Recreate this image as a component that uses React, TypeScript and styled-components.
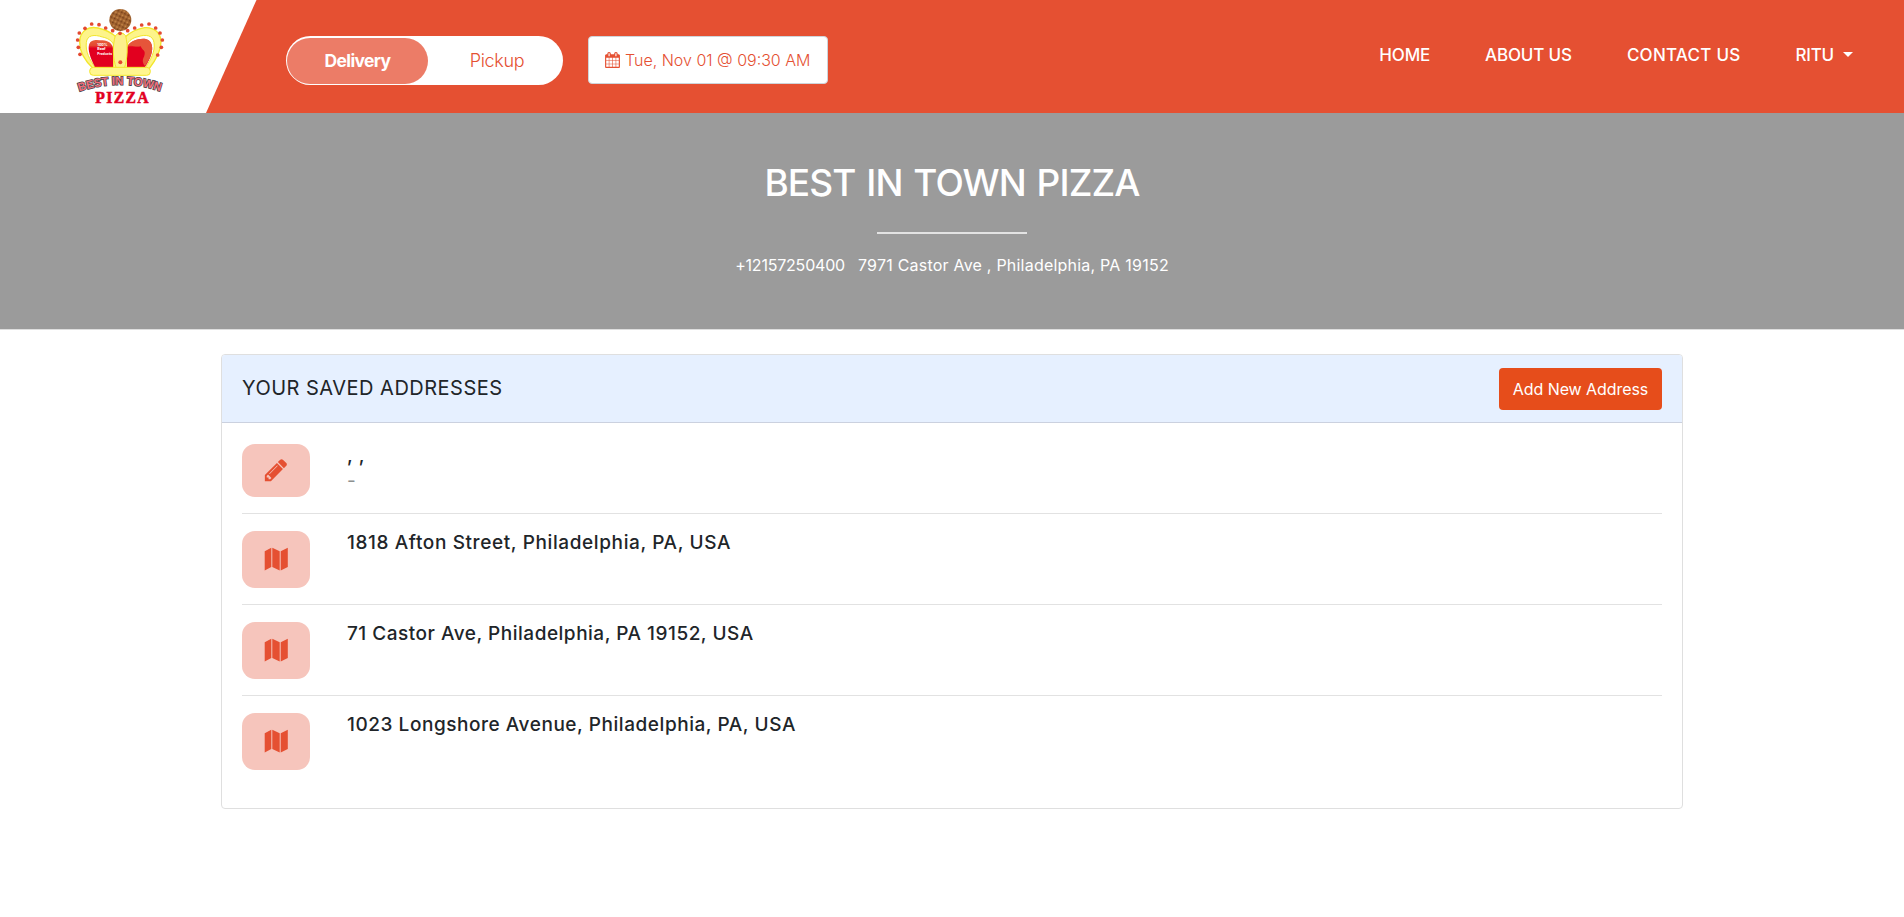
import React from "react";
import styled, { createGlobalStyle } from "styled-components";

const sans = `Inter, "Liberation Sans", sans-serif`;
const brand = "#e55032";

const GlobalStyle = createGlobalStyle`
  *, *::before, *::after { box-sizing: border-box; }
  body { margin: 0; background: #fff; color: #212529; font-family: ${sans}; }
`;

const Header = styled.header`
  display: flex;
  align-items: flex-start;
  height: 113px;
  background: ${brand};
`;

const LogoPanel = styled.a`
  display: block;
  flex: none;
  width: 257px;
  height: 113px;
  padding: 4px 0 0 70px;
  background: #fff;
  clip-path: polygon(0 0, 256.5px 0, 206px 100%, 0 100%);
`;

const Toggle = styled.div`
  display: flex;
  flex: none;
  width: 277px;
  height: 49px;
  margin: 36px 25px 0 29px;
  padding: 2px 1px 1px;
  border-radius: 25px;
  background: #fff;
`;

const ToggleOption = styled.button<{ $active?: boolean }>`
  width: ${(p) => (p.$active ? 141 : 134)}px;
  height: 46px;
  padding: 0 0 0 ${(p) => (p.$active ? 0 : 4)}px;
  border: 0;
  border-radius: 23px;
  background: ${(p) => (p.$active ? "#ec7c67" : "transparent")};
  color: ${(p) => (p.$active ? "#fff" : brand)};
  font: ${(p) => (p.$active ? 700 : 300)} ${(p) => (p.$active ? 17.5 : 18)}px/46px ${sans};
  letter-spacing: ${(p) => (p.$active ? -0.65 : -0.3)}px;
`;

const DateButton = styled.button`
  display: flex;
  flex: none;
  align-items: center;
  gap: 5px;
  width: 240px;
  height: 48px;
  margin-top: 36px;
  padding: 0 0 0 16px;
  border: 1px solid #ced4da;
  border-radius: 4px;
  background: #fff;
  color: ${brand};
  font: 300 16px/24px ${sans};
  letter-spacing: 0;
  white-space: nowrap;
`;

const Nav = styled.nav`
  display: flex;
  gap: 55px;
  margin-left: auto;
  padding-right: 51px;
`;

const NavLink = styled.a<{ $spacing: number }>`
  display: flex;
  align-items: center;
  color: #fff;
  font: 500 17px/110px ${sans};
  letter-spacing: ${(p) => p.$spacing}px;
  white-space: nowrap;
`;

const Caret = styled.span`
  margin: -2px 0 0 9px;
  border-top: 5px solid #fff;
  border-left: 5px solid transparent;
  border-right: 5px solid transparent;
`;

const Hero = styled.section`
  display: flex;
  flex-direction: column;
  align-items: center;
  height: 217px;
  padding-top: 47px;
  border-bottom: 1px solid #dedede;
  background: #9b9b9b;
  color: #fff;
`;

const HeroTitle = styled.h1`
  margin: 0;
  font: 500 37px/45px ${sans};
  letter-spacing: -0.9px;
  word-spacing: 1.8px;
`;

const HeroRule = styled.hr`
  width: 150px;
  height: 2px;
  margin: 27px 0 18px;
  border: 0;
  background: #e3e3e3;
`;

const Contact = styled.p`
  display: flex;
  gap: 13px;
  margin: 0;
  font: 400 16px/26px ${sans};
`;

const Phone = styled.span`
  letter-spacing: -0.2px;
`;

const Street = styled.span`
  letter-spacing: 0.22px;
`;

const Card = styled.main`
  width: 1462px;
  height: 455px;
  margin: 24px auto 0;
  border: 1px solid #dfdfdf;
  border-radius: 4px;
  overflow: hidden;
`;

const CardHeader = styled.div`
  display: flex;
  align-items: center;
  justify-content: space-between;
  height: 68px;
  padding: 0 20px;
  border-bottom: 1px solid #cbd1df;
  background: #e6f0ff;
`;

const CardTitle = styled.h2`
  margin: 0;
  padding-bottom: 2px;
  font: 400 20px/26px ${sans};
  letter-spacing: 0.49px;
`;

const AddButton = styled.button`
  width: 163px;
  height: 42px;
  margin-top: 1px;
  padding: 0;
  border: 0;
  border-radius: 4px;
  background: #e64d1b;
  color: #fff;
  font: 400 16px/40px ${sans};
  letter-spacing: -0.07px;
`;

const AddressList = styled.ul`
  margin: 0;
  padding: 3px 20px 0;
  list-style: none;
`;

const AddressRow = styled.li<{ $compact?: boolean }>`
  display: flex;
  align-items: flex-start;
  gap: 37px;
  height: ${(p) => (p.$compact ? 88 : 91)}px;
  padding-top: ${(p) => (p.$compact ? 18 : 17)}px;
  border-bottom: 1px solid #e2e2e2;

  &:last-child { border-bottom: 0; }
`;

const IconTile = styled.span<{ $compact?: boolean }>`
  display: flex;
  align-items: center;
  justify-content: center;
  width: 68px;
  height: ${(p) => (p.$compact ? 53 : 57)}px;
  padding-bottom: 2px;
  border-radius: 13px;
  background: #f6c5bc;
  color: ${brand};
`;

const Address = styled.div`
  display: flex;
  flex-direction: column;
`;

const AddressLine = styled.span<{ $spacing: number }>`
  font: 500 19px/23px ${sans};
  letter-spacing: ${(p) => p.$spacing}px;
  white-space: pre;
`;

const AddressNote = styled.span`
  color: #8d9190;
  font: 400 19px/27px ${sans};
`;

const Pencil = () => (
  <svg width="26" height="26" viewBox="0 0 1792 1792" fill="currentColor">
    <path d="M491 1536l91-91-235-235-91 91v107h128v128h107zm523-928q0-22-22-22-10 0-17 7l-542 542q-7 7-7 17 0 22 22 22 10 0 17-7l542-542q7-7 7-17zm-54-192l416 416-832 832h-416v-416zm683 96q0 53-37 90l-166 166-416-416 166-165q36-38 90-38 53 0 91 38l235 234q37 39 37 91z" />
  </svg>
);

const MapFold = () => (
  <svg width="24" height="24" viewBox="0 0 24 24" fill="currentColor">
    <path d="M0.7 4.2 7.3.7v19.2L.7 23.4ZM8.3.7l7.4 3.5v19.2l-7.4-3.5ZM16.7 4.2 23.8.7v19.2l-7.1 3.5Z" />
  </svg>
);

const Calendar = () => (
  <svg width="15" height="16" viewBox="0 0 1664 1792" fill="currentColor">
    <path d="M128 1664h288v-288h-288v288zm352 0h320v-288h-320v288zm-352-352h288v-320h-288v320zm352 0h320v-320h-320v320zm-352-384h288v-288h-288v288zm736 736h320v-288h-320v288zm-384-736h320v-288h-320v288zm768 736h288v-288h-288v288zm-384-352h320v-320h-320v320zm-352-864v-288q0-13-9.5-22.5t-22.5-9.5h-64q-13 0-22.5 9.5t-9.5 22.5v288q0 13 9.5 22.5t22.5 9.5h64q13 0 22.5-9.5t9.5-22.5zm736 864h288v-320h-288v320zm-384-384h320v-288h-320v288zm384 0h288v-288h-288v288zm32-480v-288q0-13-9.5-22.5t-22.5-9.5h-64q-13 0-22.5 9.5t-9.5 22.5v288q0 13 9.5 22.5t22.5 9.5h64q13 0 22.5-9.5t9.5-22.5zm384-64v1280q0 52-38 90t-90 38h-1408q-52 0-90-38t-38-90v-1280q0-52 38-90t90-38h128v-96q0-66 47-113t113-47h64q66 0 113 47t47 113v96h384v-96q0-66 47-113t113-47h64q66 0 113 47t47 113v96h128q52 0 90 38t38 90z" />
  </svg>
);

const beads: [number, number][] = [
  [30, 151], [25, 130], [23, 108], [28, 87], [45, 73], [65, 60], [87, 62], [107, 72], [128, 80],
  [150, 88], [173, 80], [194, 72], [215, 63], [237, 60], [257, 72], [270, 87], [277, 108], [274, 130], [263, 153],
];

const Logo = () => (
  <svg width="100" height="106" viewBox="0 0 300 318">
    <defs>
      <pattern id="crust" width="11" height="13" patternUnits="userSpaceOnUse" patternTransform="rotate(25)">
        <rect width="11" height="13" fill="#a0622f" />
        <circle cx="3" cy="3" r="2.6" fill="#c98a4a" />
        <circle cx="8" cy="9" r="2.2" fill="#6a3514" />
      </pattern>
      <linearGradient id="velvet" x1="0" y1="0" x2="0" y2="1">
        <stop offset="0" stopColor="#e85f3d" />
        <stop offset=".2" stopColor="#e4482f" />
        <stop offset=".3" stopColor="#e2001f" />
        <stop offset="1" stopColor="#e2001f" />
      </linearGradient>
    </defs>
    <circle cx="151" cy="48" r="33" fill="url(#crust)" />
    <path
      d="M72 196C44 170 28 143 29 113C30 78 58 66 84 72C108 77 126 88 139 99C142 84 160 84 165 99C180 86 198 75 224 71C254 69 272 88 273 113C273 144 256 170 236 196Z"
      fill="#fdf48a" stroke="#f2e62c" strokeWidth="4"
    />
    <path d="M76 191C58 165 46 143 49 116C51 92 74 91 97 99C113 102 125 110 130 120V191Z" fill="#fff" stroke="#f2e62c" strokeWidth="3" />
    <path d="M226 191C243 165 256 143 252 116C249 94 228 90 204 98C187 102 177 110 172 120V191Z" fill="#fff" stroke="#f2e62c" strokeWidth="3" />
    <path d="M75 189C61 161 53 139 57 122C63 103 84 108 98 109C115 110 127 119 129 132V191Z" fill="url(#velvet)" />
    <path d="M225 189C243 161 250 139 245 122C239 101 218 103 205 106C185 111 173 120 171 134V191Z" fill="url(#velvet)" />
    <path d="M225 186C243 161 250 139 245 122C239 101 218 103 205 106C188 110 176 118 172 128C186 120 196 132 212 126C216 140 230 138 222 158C216 168 218 178 225 186Z" fill="#e6553a" />
    <path d="M136 95C148 84 156 84 167 95C174 125 173 163 163 193H139C128 162 127 127 136 95Z" fill="#fdf08c" stroke="#f2e62c" strokeWidth="3" />
    <rect x="59" y="190" width="182" height="24" rx="11" fill="#fff68f" stroke="#f2e62c" strokeWidth="3" />
    {beads.map(([x, y]) => (
      <circle key={`${x}-${y}`} cx={x} cy={y} r="5.6" fill="#e4492f" />
    ))}
    <circle cx="151" cy="175" r="6" fill="#e4492f" />
    <g fill="#fff" fontFamily={sans} fontWeight="700" fontSize="11">
      <text x="82" y="125">100%</text>
      <text x="82" y="139">Beef</text>
      <text x="82" y="154" textLength="44" lengthAdjust="spacingAndGlyphs">Products</text>
    </g>
    <path id="arc" d="M28 263Q150 221 274 263" fill="none" />
    <text
      fill="#f0707c" stroke="#454045" strokeWidth="4.5" paintOrder="stroke"
      fontFamily={`"Liberation Sans", sans-serif`} fontWeight="700" fontSize="35"
    >
      <textPath href="#arc" textLength="248" lengthAdjust="spacingAndGlyphs">BEST IN TOWN</textPath>
    </text>
    <text
      x="76" y="296" fill="#e2001f" stroke="#e2001f" strokeWidth="1.6"
      fontFamily={`"Liberation Serif", serif`} fontWeight="700" fontSize="47"
      textLength="160" lengthAdjust="spacing"
    >
      PIZZA
    </text>
  </svg>
);

const addresses = [
  { text: "1818 Afton Street, Philadelphia, PA, USA", spacing: 0.61 },
  { text: "71 Castor Ave, Philadelphia, PA 19152, USA", spacing: 0.51 },
  { text: "1023 Longshore Avenue, Philadelphia, PA, USA", spacing: 0.55 },
];

export default function App() {
  return (
    <>
      <GlobalStyle />
      <Header>
        <LogoPanel><Logo /></LogoPanel>
        <Toggle>
          <ToggleOption $active>Delivery</ToggleOption>
          <ToggleOption>Pickup</ToggleOption>
        </Toggle>
        <DateButton>
          <Calendar />
          Tue, Nov 01 @ 09:30 AM
        </DateButton>
        <Nav>
          <NavLink $spacing={-0.2}>HOME</NavLink>
          <NavLink $spacing={-0.15}>ABOUT US</NavLink>
          <NavLink $spacing={0.25}>CONTACT US</NavLink>
          <NavLink $spacing={-0.2}>RITU<Caret /></NavLink>
        </Nav>
      </Header>
      <Hero>
        <HeroTitle>BEST IN TOWN PIZZA</HeroTitle>
        <HeroRule />
        <Contact>
          <Phone>+12157250400</Phone>
          <Street>7971 Castor Ave , Philadelphia, PA 19152</Street>
        </Contact>
      </Hero>
      <Card>
        <CardHeader>
          <CardTitle>YOUR SAVED ADDRESSES</CardTitle>
          <AddButton>Add New Address</AddButton>
        </CardHeader>
        <AddressList>
          <AddressRow $compact>
            <IconTile $compact><Pencil /></IconTile>
            <Address>
              <AddressLine $spacing={0.6}>, ,</AddressLine>
              <AddressNote>-</AddressNote>
            </Address>
          </AddressRow>
          {addresses.map((a) => (
            <AddressRow key={a.text}>
              <IconTile><MapFold /></IconTile>
              <Address>
                <AddressLine $spacing={a.spacing}>{a.text}</AddressLine>
              </Address>
            </AddressRow>
          ))}
        </AddressList>
      </Card>
    </>
  );
}
